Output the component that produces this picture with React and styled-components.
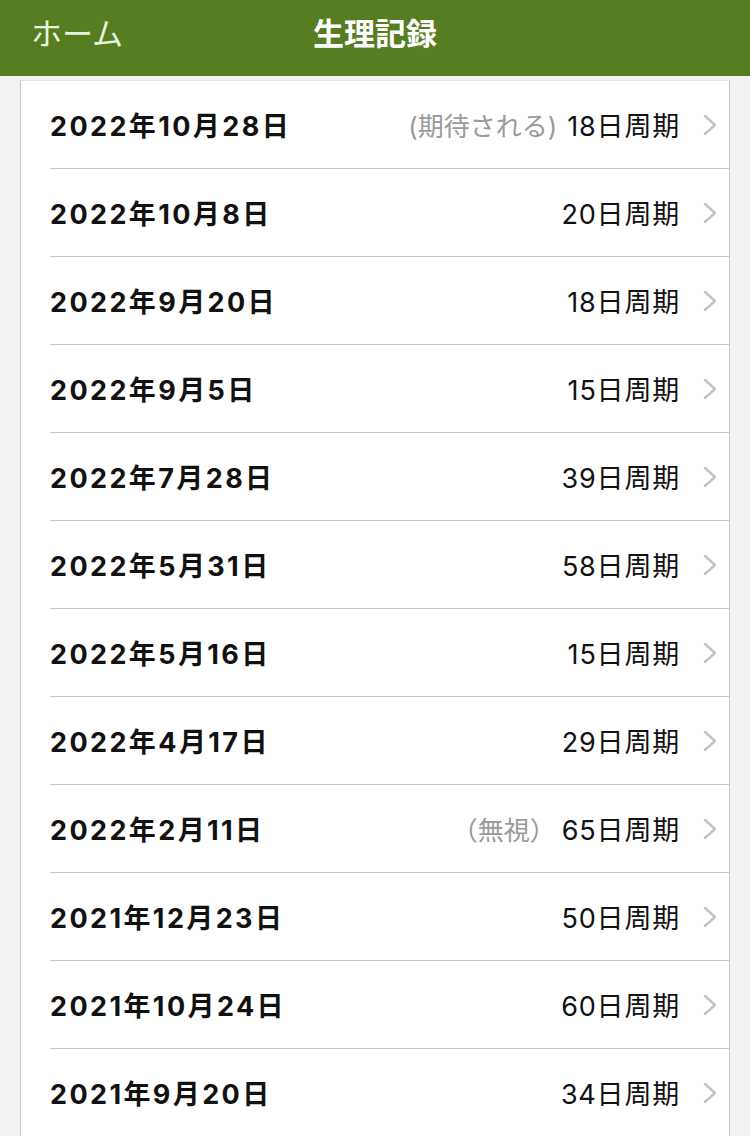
import React from "react";
import styled, { createGlobalStyle } from "styled-components";

const Global = createGlobalStyle`
  html, body { margin: 0; padding: 0; background: #f2f2f2; }
  body { font-family: Inter, "Noto Sans CJK JP", "Noto Sans", sans-serif; }
`;

const Page = styled.div`
  width: 750px;
  height: 1136px;
  overflow: hidden;
  background: #f2f2f2;
`;

const Header = styled.header`
  height: 76px;
  background: #567d22;
  display: grid;
  grid-template-columns: 1fr auto 1fr;
  align-items: center;
  padding: 0 33px;
  box-sizing: border-box;
`;

const BackLabel = styled.span`
  color: #eaf3dc;
  font-family: "Noto Sans CJK JP", sans-serif;
  font-size: 31px;
  font-weight: 400;
  justify-self: start;
  margin-top: -14px;
  margin-left: -2px;
`;

const Title = styled.h1`
  margin: -14px 0 0 0;
  color: #ffffff;
  font-family: "Noto Sans CJK JP", sans-serif;
  font-size: 31px;
  font-weight: 700;
`;

const Panel = styled.ul`
  list-style: none;
  margin: 4px 20px 0 20px;
  padding: 0 0 0 29px;
  background: #fff;
  border-left: 1px solid #c4c4c4;
  border-right: 1px solid #c4c4c4;
  border-top: 1px solid #e2e2e2;
`;

const Row = styled.li`
  height: 88px;
  box-sizing: border-box;
  display: flex;
  align-items: center;
  border-bottom: 1px solid #c8c8c8;
  padding-right: 12px;
`;

const DateText = styled.span`
  flex: 1;
  font-size: 27px;
  font-weight: 700;
  color: #111;
  letter-spacing: 2.4px;
`;

const Note = styled.span`
  color: #9a9a9a;
  font-size: 26px;
  margin-right: ${(p) => (p.$wide ? "6px" : "10px")};
`;

const Cycle = styled.span`
  font-size: 27px;
  color: #111;
  letter-spacing: 0.8px;
  margin-right: -1px;
`;

const Chevron = styled.svg`
  width: 14px;
  height: 22px;
  margin-left: 24px;
  flex: none;
`;

const rows = [
  ["2022年10月28日", "18日周期", "(期待される)", false],
  ["2022年10月8日", "20日周期"],
  ["2022年9月20日", "18日周期"],
  ["2022年9月5日", "15日周期"],
  ["2022年7月28日", "39日周期"],
  ["2022年5月31日", "58日周期"],
  ["2022年5月16日", "15日周期"],
  ["2022年4月17日", "29日周期"],
  ["2022年2月11日", "65日周期", "（無視）", true],
  ["2021年12月23日", "50日周期"],
  ["2021年10月24日", "60日周期"],
  ["2021年9月20日", "34日周期"],
];

export default function App() {
  return (
    <Page>
      <Global />
      <Header>
        <BackLabel>ホーム</BackLabel>
        <Title>生理記録</Title>
        <span />
      </Header>
      <Panel>
        {rows.map(([d, c, note, wide]) => (
          <Row key={d}>
            <DateText>{d}</DateText>
            {note && <Note $wide={wide}>{note}</Note>}
            <Cycle>{c}</Cycle>
            <Chevron viewBox="0 0 14 22">
              <path d="M2 2 L12 11 L2 20" fill="none" stroke="#c4c4c8" strokeWidth="2.4" strokeLinecap="round" strokeLinejoin="round" />
            </Chevron>
          </Row>
        ))}
      </Panel>
    </Page>
  );
}
